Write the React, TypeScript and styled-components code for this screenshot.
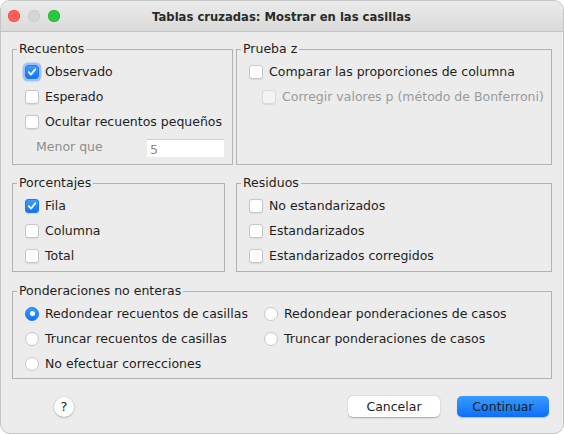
import React from 'react';
import styled, { createGlobalStyle } from 'styled-components';

const GlobalStyle = createGlobalStyle`
  html, body {
    margin: 0;
    padding: 0;
    background: #ffffff;
  }
  body {
    font-family: "DejaVu Sans", "Liberation Sans", sans-serif;
    font-size: 12.5px;
    color: #1e1e1e;
  }
`

const Window = styled.div`
  width: 564px;
  height: 434px;
  box-sizing: border-box;
  border: 1px solid #c4c4c4;
  border-radius: 10px;
  overflow: hidden;
  background: #ececec;
  display: flex;
  flex-direction: column;
`

const TitleBar = styled.div`
  height: 30px;
  flex: none;
  display: flex;
  align-items: center;
  background: linear-gradient(#ebebeb, #dadada);
  border-bottom: 1px solid #c2c2c2;
`

const Lights = styled.div`
  display: flex;
  gap: 8px;
  padding-left: 7px;
`

const Light = styled.span<{ $color: string; $edge: string }>`
  width: 12px;
  height: 12px;
  border-radius: 50%;
  background: ${p => p.$color};
  box-shadow: inset 0 0 0 0.5px ${p => p.$edge};
`

const Title = styled.div`
  flex: 1;
  text-align: center;
  font-weight: bold;
  font-size: 11.6px;
  color: #2a2a2a;
  margin-right: 60px;
  margin-top: 1px;
`

const Content = styled.div`
  flex: 1;
  display: flex;
  flex-direction: column;
  padding: 9px 11px 0 11px;
`

const Row = styled.div<{ $mt?: number }>`
  display: flex;
  justify-content: space-between;
  margin-top: ${p => p.$mt ?? 0}px;
`

const Group = styled.fieldset<{ $w?: number; $h: number }>`
  width: ${p => (p.$w ? `${p.$w}px` : 'auto')};
  flex: ${p => (p.$w ? 'none' : '1')};
  height: ${p => p.$h}px;
  box-sizing: border-box;
  margin: 0;
  padding: 2px 12px 0 12px;
  border: 1px solid #b2b2b2;
  min-width: 0;
`

const Legend = styled.legend`
  font-size: 12.5px;
  line-height: 16px;
  padding: 0 2px;
  margin-left: -8px;
  color: #1e1e1e;
`

const Option = styled.label<{ $disabled?: boolean; $indent?: number }>`
  display: flex;
  align-items: center;
  gap: 6px;
  height: 25px;
  padding-left: ${p => p.$indent ?? 0}px;
  color: ${p => (p.$disabled ? '#9a9a9a' : '#1e1e1e')};
  white-space: nowrap;
`

const Box = styled.span<{ $checked?: boolean; $disabled?: boolean; $focus?: boolean }>`
  width: 14px;
  height: 14px;
  box-sizing: border-box;
  flex: none;
  border-radius: 3px;
  display: flex;
  align-items: center;
  justify-content: center;
  background: ${p => (p.$checked ? 'linear-gradient(#3d9cfd, #0f75fb)' : p.$disabled ? '#f3f3f3' : '#ffffff')};
  border: 1px solid ${p => (p.$checked ? '#1a78f0' : p.$disabled ? '#dadada' : '#c6c6c6')};
  box-shadow: ${p => (p.$focus ? '0 0 0 2.5px rgba(90,150,240,0.5)' : '0 0.5px 1px rgba(0,0,0,0.08)')};
`

const Radio = styled.span<{ $checked?: boolean }>`
  width: 14px;
  height: 14px;
  box-sizing: border-box;
  flex: none;
  border-radius: 50%;
  display: flex;
  align-items: center;
  justify-content: center;
  background: ${p => (p.$checked ? 'linear-gradient(#3d9cfd, #0f75fb)' : '#ffffff')};
  border: 1px solid ${p => (p.$checked ? '#1a78f0' : '#c6c6c6')};
  &::after {
    content: '';
    display: ${p => (p.$checked ? 'block' : 'none')};
    width: 5px;
    height: 5px;
    border-radius: 50%;
    background: #ffffff;
  }
`

const Check = () => (
  <svg width="10" height="10" viewBox="0 0 10 10">
    <path d="M1.8 5.2 L4 7.6 L8.3 2.2" fill="none" stroke="#ffffff" strokeWidth="1.8" strokeLinecap="round" strokeLinejoin="round" />
  </svg>
)

const LimitRow = styled.div`
  display: flex;
  align-items: center;
  justify-content: space-between;
  height: 25px;
  padding-left: 11px;
  color: #8c8c8c;
`

const NumberField = styled.div`
  width: 77px;
  height: 18px;
  box-sizing: border-box;
  background: #ffffff;
  border-top: 1px solid #d0d0d0;
  color: #8c8c8c;
  padding: 2px 3px 0;
  margin-right: -4px;
  margin-top: 2px;
`

const Grid = styled.div`
  display: grid;
  grid-template-columns: 239px 1fr;
`

const Footer = styled.div`
  display: flex;
  align-items: center;
  padding: 17px 3px 0 42px;
`

const Help = styled.div`
  width: 20px;
  height: 20px;
  border-radius: 50%;
  background: #ffffff;
  box-shadow: 0 0.5px 2px rgba(0,0,0,0.35);
  display: flex;
  align-items: center;
  justify-content: center;
  font-size: 13px;
  color: #1e1e1e;
`

const Spacer = styled.div`
  flex: 1;
`

const Button = styled.button<{ $primary?: boolean }>`
  width: 92px;
  height: 21px;
  margin-left: ${p => (p.$primary ? 17 : 0)}px;
  border-radius: 5px;
  border: none;
  font-family: inherit;
  font-size: 12.5px;
  color: #1e1e1e;
  padding: 0;
  background: ${p => (p.$primary ? 'linear-gradient(#3b9bfd, #0b6ffb)' : '#ffffff')};
  box-shadow: ${p => (p.$primary ? '0 0.5px 1px rgba(0,0,0,0.2)' : '0 0.5px 1.5px rgba(0,0,0,0.3)')};
`

type CheckProps = { label: string; checked?: boolean; disabled?: boolean; indent?: number; focus?: boolean }

const CheckOption = ({ label, checked, disabled, indent, focus }: CheckProps) => (
  <Option $disabled={disabled} $indent={indent}>
    <Box $checked={checked} $disabled={disabled} $focus={focus}>{checked && <Check />}</Box>
    {label}
  </Option>
)

const RadioOption = ({ label, checked }: { label: string; checked?: boolean }) => (
  <Option>
    <Radio $checked={checked} />
    {label}
  </Option>
)

function App() {
  return (
    <Window>
      <GlobalStyle />
      <TitleBar>
        <Lights>
          <Light $color="#fe5f57" $edge="#e0443e" />
          <Light $color="#d5d5d5" $edge="#c2c2c2" />
          <Light $color="#29c840" $edge="#1aab29" />
        </Lights>
        <Title>Tablas cruzadas: Mostrar en las casillas</Title>
      </TitleBar>
      <Content>
        <Row>
          <Group $w={221} $h={124}>
            <Legend>Recuentos</Legend>
            <CheckOption label="Observado" checked focus />
            <CheckOption label="Esperado" />
            <CheckOption label="Ocultar recuentos pequeños" />
            <LimitRow>
              Menor que
              <NumberField>5</NumberField>
            </LimitRow>
          </Group>
          <Group $w={316} $h={124}>
            <Legend>Prueba z</Legend>
            <CheckOption label="Comparar las proporciones de columna" />
            <CheckOption label="Corregir valores p (método de Bonferroni)" disabled indent={13} />
          </Group>
        </Row>
        <Row $mt={10}>
          <Group $w={213} $h={97}>
            <Legend>Porcentajes</Legend>
            <CheckOption label="Fila" checked />
            <CheckOption label="Columna" />
            <CheckOption label="Total" />
          </Group>
          <Group $w={316} $h={97}>
            <Legend>Residuos</Legend>
            <CheckOption label="No estandarizados" />
            <CheckOption label="Estandarizados" />
            <CheckOption label="Estandarizados corregidos" />
          </Group>
        </Row>
        <Row $mt={11}>
          <Group $h={96}>
            <Legend>Ponderaciones no enteras</Legend>
            <Grid>
              <RadioOption label="Redondear recuentos de casillas" checked />
              <RadioOption label="Redondear ponderaciones de casos" />
              <RadioOption label="Truncar recuentos de casillas" />
              <RadioOption label="Truncar ponderaciones de casos" />
              <RadioOption label="No efectuar correcciones" />
            </Grid>
          </Group>
        </Row>
        <Footer>
          <Help>?</Help>
          <Spacer />
          <Button>Cancelar</Button>
          <Button $primary>Continuar</Button>
        </Footer>
      </Content>
    </Window>
  );
}

export default App;
